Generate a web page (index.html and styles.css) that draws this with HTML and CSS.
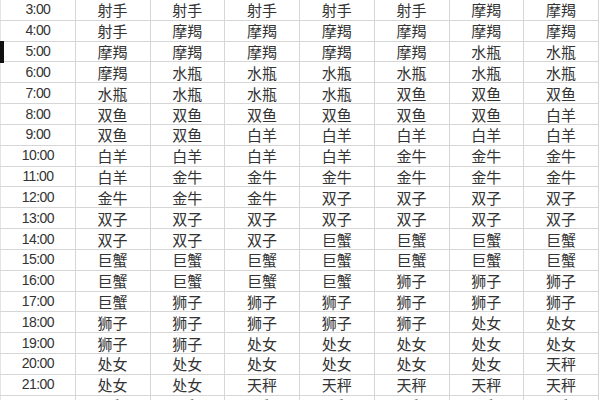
FILE: index.html
```html
<!DOCTYPE html>
<html lang="zh">
<head>
<meta charset="utf-8">
<title>星座时间表</title>
<link rel="stylesheet" href="styles.css">
</head>
<body>
<div class="frame">
  <div class="edge-mark"></div>
  <table class="zodiac">
    <tbody>
      <tr><td class="t">3:00</td><td>射手</td><td>射手</td><td>射手</td><td>射手</td><td>射手</td><td>摩羯</td><td>摩羯</td></tr>
      <tr><td class="t">4:00</td><td>射手</td><td>摩羯</td><td>摩羯</td><td>摩羯</td><td>摩羯</td><td>摩羯</td><td>摩羯</td></tr>
      <tr><td class="t">5:00</td><td>摩羯</td><td>摩羯</td><td>摩羯</td><td>摩羯</td><td>摩羯</td><td>水瓶</td><td>水瓶</td></tr>
      <tr><td class="t">6:00</td><td>摩羯</td><td>水瓶</td><td>水瓶</td><td>水瓶</td><td>水瓶</td><td>水瓶</td><td>水瓶</td></tr>
      <tr><td class="t">7:00</td><td>水瓶</td><td>水瓶</td><td>水瓶</td><td>水瓶</td><td>双鱼</td><td>双鱼</td><td>双鱼</td></tr>
      <tr><td class="t">8:00</td><td>双鱼</td><td>双鱼</td><td>双鱼</td><td>双鱼</td><td>双鱼</td><td>双鱼</td><td>白羊</td></tr>
      <tr><td class="t">9:00</td><td>双鱼</td><td>双鱼</td><td>白羊</td><td>白羊</td><td>白羊</td><td>白羊</td><td>白羊</td></tr>
      <tr><td class="t">10:00</td><td>白羊</td><td>白羊</td><td>白羊</td><td>白羊</td><td>金牛</td><td>金牛</td><td>金牛</td></tr>
      <tr><td class="t">11:00</td><td>白羊</td><td>金牛</td><td>金牛</td><td>金牛</td><td>金牛</td><td>金牛</td><td>金牛</td></tr>
      <tr><td class="t">12:00</td><td>金牛</td><td>金牛</td><td>金牛</td><td>双子</td><td>双子</td><td>双子</td><td>双子</td></tr>
      <tr><td class="t">13:00</td><td>双子</td><td>双子</td><td>双子</td><td>双子</td><td>双子</td><td>双子</td><td>双子</td></tr>
      <tr><td class="t">14:00</td><td>双子</td><td>双子</td><td>双子</td><td>巨蟹</td><td>巨蟹</td><td>巨蟹</td><td>巨蟹</td></tr>
      <tr><td class="t">15:00</td><td>巨蟹</td><td>巨蟹</td><td>巨蟹</td><td>巨蟹</td><td>巨蟹</td><td>巨蟹</td><td>巨蟹</td></tr>
      <tr><td class="t">16:00</td><td>巨蟹</td><td>巨蟹</td><td>巨蟹</td><td>巨蟹</td><td>狮子</td><td>狮子</td><td>狮子</td></tr>
      <tr><td class="t">17:00</td><td>巨蟹</td><td>狮子</td><td>狮子</td><td>狮子</td><td>狮子</td><td>狮子</td><td>狮子</td></tr>
      <tr><td class="t">18:00</td><td>狮子</td><td>狮子</td><td>狮子</td><td>狮子</td><td>狮子</td><td>处女</td><td>处女</td></tr>
      <tr><td class="t">19:00</td><td>狮子</td><td>狮子</td><td>处女</td><td>处女</td><td>处女</td><td>处女</td><td>处女</td></tr>
      <tr><td class="t">20:00</td><td>处女</td><td>处女</td><td>处女</td><td>处女</td><td>处女</td><td>处女</td><td>天秤</td></tr>
      <tr><td class="t">21:00</td><td>处女</td><td>处女</td><td>天秤</td><td>天秤</td><td>天秤</td><td>天秤</td><td>天秤</td></tr>
      <tr><td class="t">22:00</td><td>天秤</td><td>天秤</td><td>天秤</td><td>天秤</td><td>天秤</td><td>天秤</td><td>天秤</td></tr>
    </tbody>
  </table>
</div>
</body>
</html>
```

FILE: styles.css
```css
html, body {
  margin: 0;
  padding: 0;
  background: #ffffff;
  overflow: hidden;
}

.frame {
  position: relative;
  width: 600px;
  height: 400px;
  overflow: hidden;
}

.edge-mark {
  position: absolute;
  left: 0;
  top: 41px;
  width: 4px;
  height: 22px;
  background: #111;
}

.zodiac {
  width: 599px;
  margin-top: -1px;
  border-collapse: collapse;
  table-layout: fixed;
  color: #333333;
}

.zodiac td {
  height: 19.83px;
  padding: 0;
  border: 1px solid #d6d6d6;
  text-align: center;
  vertical-align: middle;
  font-family: "Noto Sans CJK SC", "Noto Sans", sans-serif;
  font-size: 15px;
  line-height: 19px;
  overflow: hidden;
  white-space: nowrap;
}

.zodiac td:first-child {
  border-left-color: #e4e4e4;
}

.zodiac td.t {
  font-family: "Liberation Sans", Arial, sans-serif;
  font-size: 14px;
  letter-spacing: -0.6px;
}
```
